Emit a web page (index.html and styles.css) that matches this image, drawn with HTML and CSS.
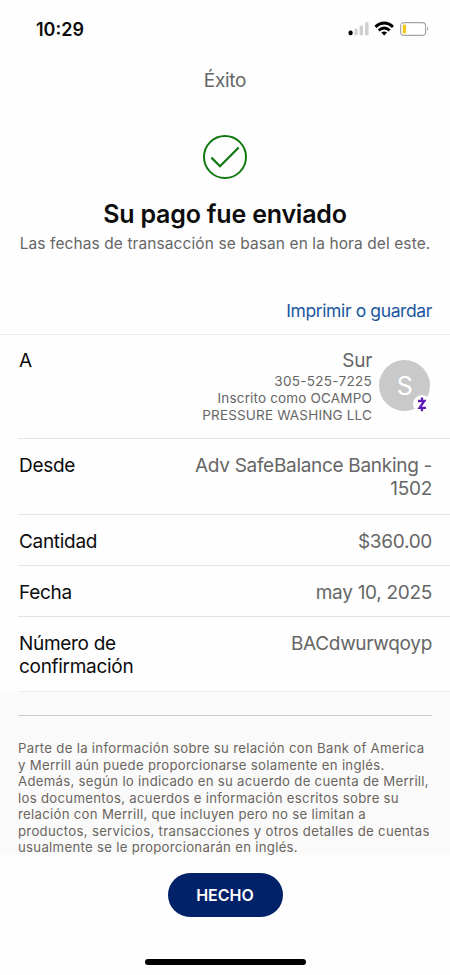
FILE: index.html
```
<!DOCTYPE html>
<html lang="es">
<head>
  <meta charset="UTF-8" />
  <meta name="viewport" content="width=device-width, initial-scale=1.0"/>
  <title>Éxito</title>
  <link rel="stylesheet" href="styles.css">
</head>
<body>

  <div class="status-bar">
    <span class="clock">10:29</span>
    <svg class="status-icons" width="84" height="18" viewBox="0 0 84 18">
      <!-- signal -->
      <rect x="1.6" y="10.6" width="4" height="4.6" rx="1.6" fill="#000"/>
      <rect x="7.4" y="8.6" width="3.2" height="6.6" rx="0.8" fill="#d0d0d0"/>
      <rect x="12.6" y="5.4" width="3.4" height="9.8" rx="0.8" fill="#d0d0d0"/>
      <rect x="18" y="2.2" width="3.6" height="13" rx="0.8" fill="#d0d0d0"/>
      <!-- wifi -->
      <g fill="none" stroke="#000" stroke-width="2.9">
        <path d="M28.4 6.8 Q37.2 -0.8 46 6.8"/>
        <path d="M31.7 10.4 Q37.2 5.4 42.7 10.4"/>
      </g>
      <path d="M34.3 12.6 Q37.2 10.2 40.1 12.6 L37.2 15.4Z" fill="#000"/>
      <!-- battery -->
      <rect x="53.6" y="2.6" width="25" height="12.8" rx="3.4" fill="#fff" stroke="#a4a4a4" stroke-width="1.1"/>
      <rect x="55.7" y="4.5" width="3.4" height="9" rx="1.2" fill="#f3c81c"/>
      <path d="M80 6.8 Q82.4 8.9 80 11Z" fill="#a4a4a4"/>
    </svg>
  </div>

  <header>Éxito</header>

  <main>
    <section class="confirmation">
      <svg class="check" width="46" height="46" viewBox="0 0 46 46" fill="none" stroke="#0f780f">
        <circle cx="23" cy="23" r="21" stroke-width="2"/>
        <path d="M9.4 23.6 L18 32.2 L36.7 13.5" stroke-width="2.2"/>
      </svg>
      <h1>Su pago fue enviado</h1>
      <p class="note">Las fechas de transacción se basan en la hora del este.</p>
    </section>

    <a class="print-link" href="#">Imprimir o guardar</a>

    <div class="details">
      <div class="row recipient">
        <div class="label">A</div>
        <div class="payee">
          <div class="payee-name">Sur</div>
          <div class="payee-phone">305-525-7225</div>
          <div class="payee-info">Inscrito como OCAMPO<br>PRESSURE WASHING LLC</div>
        </div>
        <div class="avatar">S
          <span class="zelle">
            <svg width="10" height="15" viewBox="0 0 10 15" fill="none" stroke="#5f1bb5" stroke-width="2.3">
              <path d="M1 4 H7.4 L2.6 10.8 H9"/>
              <path d="M5 0.6 V4 M5 10.8 V14.2"/>
            </svg>
          </span>
        </div>
      </div>
      <div class="row account">
        <div class="label">Desde</div>
        <div class="value">Adv SafeBalance Banking -<br>1502</div>
      </div>
      <div class="row">
        <div class="label">Cantidad</div>
        <div class="value">$360.00</div>
      </div>
      <div class="row">
        <div class="label">Fecha</div>
        <div class="value">may 10, 2025</div>
      </div>
      <div class="row">
        <div class="label">Número de<br>confirmación</div>
        <div class="value">BACdwurwqoyp</div>
      </div>
    </div>

    <section class="disclosure">
      <p>Parte de la información sobre su relación con Bank of America<br>
      y Merrill aún puede proporcionarse solamente en inglés.<br>
      Además, según lo indicado en su acuerdo de cuenta de Merrill,<br>
      los documentos, acuerdos e información escritos sobre su<br>
      relación con Merrill, que incluyen pero no se limitan a<br>
      productos, servicios, transacciones y otros detalles de cuentas<br>
      usualmente se le proporcionarán en inglés.</p>
    </section>
  </main>

  <footer>
    <button>HECHO</button>
    <div class="home-indicator"></div>
  </footer>

</body>
</html>
```
FILE: styles.css
```
:root {
  --text: #0c0c0c;
  --muted: #666;
  --line: #e4e4e4;
  --link: #1a56a0;
  --navy: #012169;
}

* {
  box-sizing: border-box;
}

body {
  margin: 0;
  height: 975px;
  display: flex;
  flex-direction: column;
  font-family: Inter, 'Liberation Sans', sans-serif;
  color: var(--text);
  background: #fefefe;
  overflow: hidden;
}

.status-bar {
  height: 58px;
  display: flex;
  justify-content: space-between;
  align-items: center;
  padding: 0 19px 0 36px;
}

.clock {
  font-size: 18px;
  font-weight: 600;
}

header {
  height: 44px;
  line-height: 45px;
  text-align: center;
  font-size: 19px;
  color: var(--muted);
  letter-spacing: -0.3px;
}

main {
  height: 752px;
}

.confirmation {
  height: 186px;
  padding-top: 32px;
  display: flex;
  flex-direction: column;
  align-items: center;
}

h1 {
  margin: 18px 0 0;
  font-size: 25px;
  line-height: 32px;
  font-weight: 600;
  letter-spacing: -0.2px;
  white-space: nowrap;
}

.note {
  margin: 4px 0 0;
  font-size: 15.5px;
  line-height: 20px;
  letter-spacing: 0.09px;
  color: var(--muted);
  white-space: nowrap;
}

.print-link {
  display: block;
  height: 46px;
  line-height: 46px;
  padding-right: 18px;
  text-align: right;
  font-size: 17.5px;
  letter-spacing: -0.38px;
  color: var(--link);
  text-decoration: none;
}

.details {
  border-top: 1px solid #eee;
  padding-left: 18px;
}

.row {
  display: flex;
  justify-content: space-between;
  padding: 15px 18px 12px 1px;
  border-bottom: 1px solid var(--line);
  font-size: 19px;
  line-height: 23px;
  letter-spacing: -0.3px;
  white-space: nowrap;
}

.row.account {
  padding-bottom: 14px;
}

.row:last-child {
  padding-bottom: 13px;
  border-color: #eee;
}

.value {
  color: var(--muted);
  text-align: right;
}

.row.recipient {
  height: 104px;
  padding-top: 14px;
}

.payee {
  margin-left: auto;
  text-align: right;
  color: var(--muted);
}

.payee-phone,
.payee-info {
  font-size: 13.5px;
  line-height: 17px;
  letter-spacing: 0.17px;
}

.payee-phone {
  line-height: 18px;
  letter-spacing: 0.3px;
}

.avatar {
  position: relative;
  width: 51px;
  height: 51px;
  margin: 11px 2px 0 7px;
  border-radius: 50%;
  background: #c9c9c9;
  color: #fff;
  font-size: 25px;
  line-height: 52px;
  text-align: center;
}

.zelle {
  position: absolute;
  right: -1px;
  bottom: -2px;
  width: 18px;
  height: 18px;
  border-radius: 50%;
  background: #fefefe;
  display: flex;
  align-items: center;
  justify-content: center;
}

.disclosure {
  height: 163px;
  padding: 23px 18px 0;
  background: #fafafa;
}

.disclosure p {
  margin: 0;
  padding-top: 24px;
  border-top: 1px solid #ccc;
  font-size: 13.2px;
  line-height: 16.5px;
  letter-spacing: 0.29px;
  color: #6a655e;
  white-space: nowrap;
}

footer {
  flex: 1;
  display: flex;
  flex-direction: column;
  align-items: center;
  padding-top: 19px;
}

button {
  width: 115px;
  height: 44px;
  padding: 0;
  border: none;
  border-radius: 22px;
  background: var(--navy);
  color: #fff;
  font-family: inherit;
  font-size: 16px;
  font-weight: 600;
}

.home-indicator {
  width: 161px;
  height: 6px;
  margin-top: 42px;
  border-radius: 3px;
  background: #000;
}
```
